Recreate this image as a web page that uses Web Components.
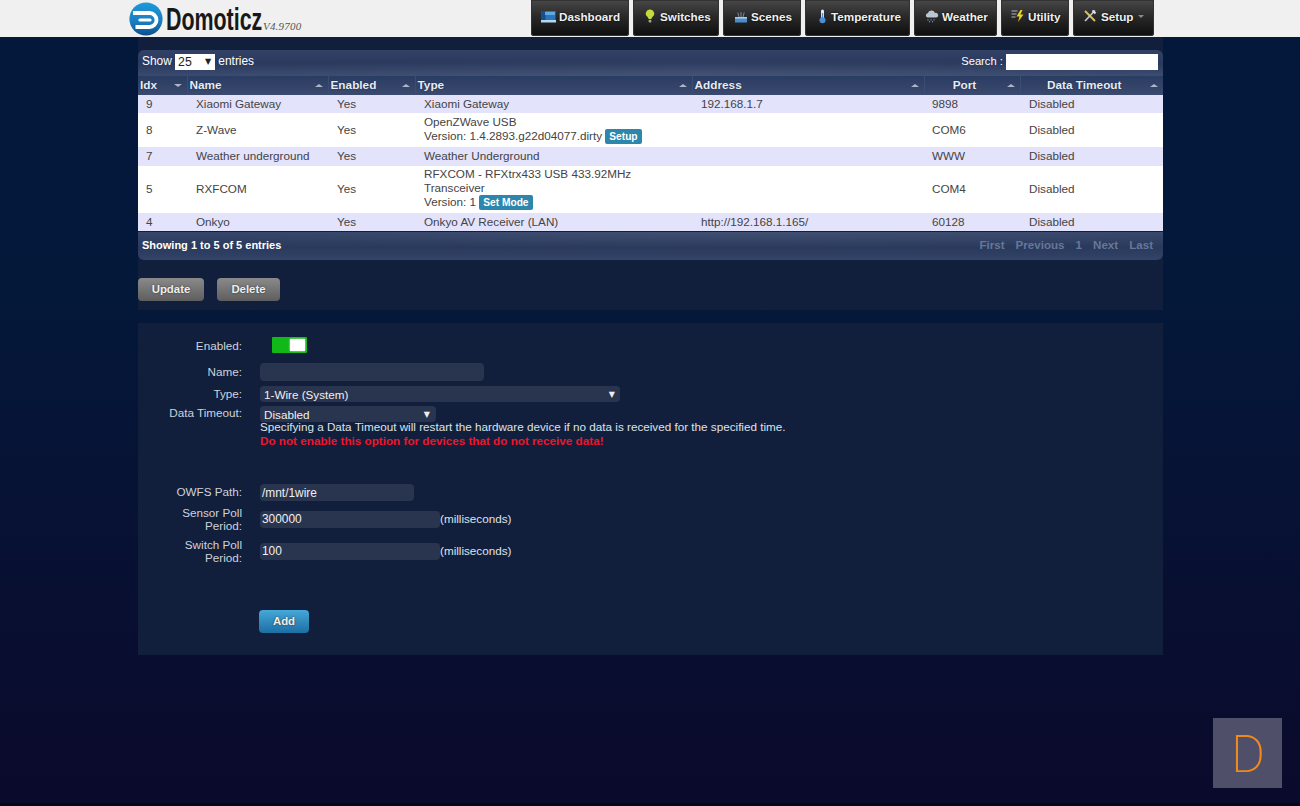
<!DOCTYPE html>
<html><head><meta charset="utf-8"><style>
html,body{margin:0;padding:0}
body{width:1300px;height:806px;overflow:hidden;background:linear-gradient(#03193a 0,#04183a 300px,#0a0c2e 720px,#0a0b2c 802px,#050516 804px);font:12px "Liberation Sans",Arial,sans-serif;position:relative}
</style></head><body>
<template id="t-header"><style>
:host{display:flex;height:37px;background:#f0f0f0;box-sizing:border-box;padding-left:129px;align-items:flex-start;position:relative}
.logo{display:flex;align-items:flex-start;width:402px;flex:none}
.logo svg{margin-top:2px;flex:none}
.name{display:block;width:97px;flex:none;font:bold 31px/34px "Liberation Sans",sans-serif;color:#181818;margin-left:3px;margin-top:3px;transform:scaleX(.69);transform-origin:left top;white-space:nowrap}
.v{font:italic 11px "Liberation Serif",serif;color:#555;margin-top:20px;margin-left:0;letter-spacing:.2px}
nav{display:flex;gap:4px}
</style><div class="logo"><svg width="34" height="34" viewBox="0 0 34 34"><defs><linearGradient id="lg" x1="0" y1="0" x2="0" y2="1"><stop offset="0" stop-color="#1e9ad8"/><stop offset=".6" stop-color="#1a7cc0"/><stop offset="1" stop-color="#0a4f8c"/></linearGradient></defs><circle cx="17" cy="17" r="16.6" fill="url(#lg)"/><path d="M4 11H20.5a7 7 0 0 1 0 14H6.5" fill="none" stroke="#fff" stroke-width="3.8"/><path d="M11 18H21" stroke="#fff" stroke-width="3.2" stroke-linecap="round"/></svg><span class="name">Domoticz</span><span class="v">V4.9700</span></div><nav><slot></slot></nav></template>

<template id="t-nav"><style>
:host{display:flex;align-items:center;height:36px;box-sizing:border-box;background:linear-gradient(#474747,#2a2a2a 45%,#0d0d0d);border-radius:0 0 3px 3px;color:#f0f0f0;font:bold 11.7px "Liberation Sans",sans-serif;text-shadow:0 0 2px #000;padding:0 0 4px var(--l,10px);gap:var(--g,3px);width:var(--w,80px);box-shadow:0 0 0 1px #333 inset;white-space:nowrap}
::slotted(svg){flex:none}
</style><slot name="i"></slot><slot></slot></template>

<template id="t-panel"><style>
:host{display:block;background:#111f3d}
</style><slot></slot></template>

<template id="t-table"><style>
:host{display:block;color:#fff;font:12px "Liberation Sans",sans-serif}
.top{height:26px;box-sizing:border-box;border-radius:6px 6px 0 0;background:radial-gradient(ellipse 55% 70% at 55% 100%,rgba(255,255,255,.05),transparent),linear-gradient(#324266,#2a3a5e 50%,#3a4a6e 100%);display:flex;align-items:center;justify-content:space-between;padding:0 5px 3px 4px;font-size:11.9px}
.fake{display:inline-flex;align-items:center;justify-content:space-between;background:#fff;color:#222;width:40px;height:16px;box-sizing:border-box;padding:0 4px 0 3px;font-size:12.3px;vertical-align:middle}
.fake i{font:normal 8px "DejaVu Sans",sans-serif}
.sr{font-size:11.2px}
.srch{display:inline-block;width:152px;height:16px;background:#fff;vertical-align:middle}
table{width:1025px;border-collapse:collapse;table-layout:fixed;border-spacing:0}
th{height:19px;padding:0 2px 1px;box-sizing:border-box;font-size:11.8px;font-weight:bold;color:#e9edf5;background:linear-gradient(#2a3c62,#3b4a6e);border-right:1px solid #3c4d72;text-align:left;position:relative;text-shadow:0 0 1px #0a1838}
th:last-child{border-right:0}
th.c{text-align:center;padding-right:17px}
th::after{content:"";position:absolute;right:5px;top:8px;width:0;height:0;border:4px solid transparent;border-bottom:3px solid #aeb7c8;border-top:0}
th.d::after{border-bottom:0;border-top:3px solid #aeb7c8}
td{padding:0 8px 0 9px;box-sizing:border-box;font-size:11.7px;line-height:14px;color:#444;vertical-align:middle}
td:first-child,td:nth-child(6){padding-left:8px}
tr.u td{padding-bottom:2px}
tr.z td{padding-bottom:0}
tr.z td:nth-child(4){padding-bottom:2px}
tr.o td{background:#e3e3fc;height:18px}
tr.e td{background:#fff}
.b{display:inline-block;background:#2d87ad;color:#fff;font-weight:bold;font-size:10.2px;line-height:15px;padding:0 4px;border-radius:2px;vertical-align:0}
.foot{height:28px;margin-top:1px;box-sizing:border-box;border-radius:0 0 6px 6px;background:radial-gradient(ellipse 55% 60% at 60% 0,rgba(255,255,255,.05),transparent),linear-gradient(#36466b,#2a3a5c 55%,#33436a);display:flex;align-items:center;justify-content:space-between;padding:0 10px 3px 4px;font-weight:bold;font-size:11px}
.pg{display:flex;gap:11px;color:#66779a;font-size:11.6px}
</style>
<div class="top"><span>Show <span class="fake">25<i>▼</i></span> entries</span><span class="sr">Search : <span class="srch"></span></span></div>
<table><colgroup><col style="width:49px"><col style="width:141px"><col style="width:87px"><col style="width:277px"><col style="width:232px"><col style="width:96px"><col style="width:143px"></colgroup>
<thead><tr><th class="d">Idx</th><th>Name</th><th>Enabled</th><th>Type</th><th>Address</th><th class="c">Port</th><th class="c">Data Timeout</th></tr></thead>
<tbody>
<tr class="o"><td>9</td><td>Xiaomi Gateway</td><td>Yes</td><td>Xiaomi Gateway</td><td>192.168.1.7</td><td>9898</td><td>Disabled</td></tr>
<tr class="e z" style="height:34px"><td>8</td><td>Z-Wave</td><td>Yes</td><td>OpenZWave USB<br>Version: 1.4.2893.g22d04077.dirty <span class="b">Setup</span></td><td></td><td>COM6</td><td>Disabled</td></tr>
<tr class="o u" style="height:19px"><td>7</td><td>Weather underground</td><td>Yes</td><td>Weather Underground</td><td></td><td>WWW</td><td>Disabled</td></tr>
<tr class="e u" style="height:47px"><td>5</td><td>RXFCOM</td><td>Yes</td><td>RFXCOM - RFXtrx433 USB 433.92MHz Transceiver<br>Version: 1 <span class="b">Set Mode</span></td><td></td><td>COM4</td><td>Disabled</td></tr>
<tr class="o"><td>4</td><td>Onkyo</td><td>Yes</td><td>Onkyo AV Receiver (LAN)</td><td>http://192.168.1.165/</td><td>60128</td><td>Disabled</td></tr>
</tbody></table>
<div class="foot"><span>Showing 1 to 5 of 5 entries</span><span class="pg"><span>First</span><span>Previous</span><span>1</span><span>Next</span><span>Last</span></span></div>
</template>

<template id="t-btn"><style>
:host{display:inline-flex;align-items:center;justify-content:center;height:23px;box-sizing:border-box;border-radius:4px;font:bold 11.4px "Liberation Sans",sans-serif;color:#eee;background:linear-gradient(#8a8a8a,#5e5e5e);padding-bottom:1px;width:var(--w,66px);text-shadow:0 0 2px #333}
:host([blue]){background:linear-gradient(#45a9d8,#1c6ea3)}
</style><slot></slot></template>

<template id="t-row"><style>
:host{display:flex;align-items:var(--a,flex-start);margin-top:var(--m,0);color:#cfd2d9;font:11.7px/13px "Liberation Sans",sans-serif}
.l{width:104px;flex:none;text-align:right;margin-right:18px;padding-top:var(--lt,0)}
.c{flex:none;display:flex;align-items:center;color:#dfe2e8}
</style><div class="l"><slot name="label"></slot></div><div class="c"><slot></slot></div></template>

<template id="t-field"><style>
:host{display:inline-flex;align-items:center;justify-content:space-between;box-sizing:border-box;height:var(--h,18px);width:var(--w,224px);background:#29344f;border-radius:4px;padding:0 5px 0 2px;color:#f0f0f0;font:11.9px "Liberation Sans",sans-serif;vertical-align:middle}
:host([arrow]){padding:1px 6px 0 4px;font-size:11.7px}
i{font:normal 8px "DejaVu Sans",sans-serif;color:#eee}
</style><span><slot></slot></span><i id="a"></i></template>

<template id="t-toggle"><style>
:host{display:block;width:35px;height:16px;background:#10b818;box-sizing:border-box;position:relative;border-radius:1px}
b{position:absolute;right:2px;top:2px;width:15px;height:12px;background:#fff;box-shadow:0 0 2px #bfb}
</style><b></b></template>

<template id="t-mark"><style>
:host{position:absolute;left:1213px;top:718px;width:69px;height:70px;background:#4f4f69;color:#f0891a;font:200 52px/73px Roboto,"Liberation Sans",sans-serif;text-align:center;text-indent:1px}
</style><slot></slot></template>

<dz-header>
<dz-nav style="--w:98px"><svg slot="i" width="15" height="13" viewBox="0 0 15 13"><rect x="0.5" y="1" width="14" height="9" fill="#2a75bd"/><rect x="0.5" y="1" width="4" height="9" fill="#154f90"/><rect x="4" y="2" width="10" height="3" fill="#5ea9e2"/><rect x="0" y="10" width="15" height="2.5" fill="#b4d8f0"/></svg>Dashboard</dz-nav>
<dz-nav style="--w:86px;--l:11px;--g:4px"><svg slot="i" width="12" height="14" viewBox="0 0 12 14"><path d="M6 0.5a4 4 0 0 1 2.6 7.2c-.8.8-1.2 1.6-1.2 2.4H4.6c0-.8-.4-1.6-1.2-2.4A4 4 0 0 1 6 .5z" fill="#c6da3e"/><rect x="4.6" y="10.8" width="2.8" height="2.6" rx="1" fill="#a8a890"/></svg>Switches</dz-nav>
<dz-nav style="--w:78px;--l:11px"><svg slot="i" width="14" height="14" viewBox="0 0 14 14"><rect x="1" y="8" width="12" height="5.5" fill="#4a8ccc"/><rect x="1" y="8" width="12" height="1.6" fill="#a6cdee"/><path d="M7 8V3M5 8 3.8 3.5M9 8l1.2-4.5" stroke="#8593a6" stroke-width=".9"/></svg>Scenes</dz-nav>
<dz-nav style="--w:105px;--l:13px;--g:4px"><svg slot="i" width="9" height="15" viewBox="0 0 9 15"><rect x="3" y="0.5" width="3" height="9" rx="1.5" fill="#e8eef5"/><circle cx="4.5" cy="11.3" r="3" fill="#4c8fd8"/><rect x="3.8" y="4" width="1.4" height="6" fill="#4c8fd8"/></svg>Temperature</dz-nav>
<dz-nav style="--w:83px;--l:11px"><svg slot="i" width="14" height="13" viewBox="0 0 14 13"><path d="M2.5 7.5a2.2 2.2 0 0 1 .3-4.3 3.8 3.8 0 0 1 7.2-.3 2.3 2.3 0 0 1 1.4 4.6z" fill="#bcc6d2"/><path d="M3 9v1.6M6 9v1.6M9 9v1.6M4.5 11v1.4M7.5 11v1.4" stroke="#5f96d0" stroke-width="1"/></svg>Weather</dz-nav>
<dz-nav style="--w:68px"><svg slot="i" width="14" height="14" viewBox="0 0 14 14"><path d="M0.5 2h6M0.5 5h5M0.5 8h4" stroke="#a9bace" stroke-width="1.2"/><path d="M9.5 1 5.5 7.5h3L7 13l5.5-7.5H9.3L11.5 1z" fill="#f1d21c"/></svg>Utility</dz-nav>
<dz-nav style="--w:81px;--g:4px"><svg slot="i" width="14" height="14" viewBox="0 0 14 14"><path d="M2 2l10 10" stroke="#d8c24a" stroke-width="2"/><path d="M12 1.5 2 12" stroke="#c8ccd0" stroke-width="1.6"/><path d="M9.5 1.5l3 3" stroke="#e0e3e6" stroke-width="2"/></svg>Setup<span style="display:inline-block;width:0;height:0;border:3px solid transparent;border-top-color:#888;border-bottom:0;margin-left:1px"></span></dz-nav>
</dz-header>

<dz-page>
<dz-panel style="padding:13px 0 0;height:273px;box-sizing:border-box">
<dz-table></dz-table>
<div style="display:flex;gap:13px;margin-top:18px"><dz-btn>Update</dz-btn><dz-btn style="--w:63px">Delete</dz-btn></div>
</dz-panel>
<dz-panel style="margin-top:13px;height:332px;box-sizing:border-box;padding-top:14px">
<dz-row style="--lt:2px"><span slot="label">Enabled:</span><dz-toggle style="margin-left:12px"></dz-toggle></dz-row>
<dz-row style="--m:10px;--lt:2px"><span slot="label">Name:</span><dz-field></dz-field></dz-row>
<dz-row style="--m:5px;--lt:1px"><span slot="label">Type:</span><dz-field style="--w:360px;--h:16px;padding-right:5px" arrow>1-Wire (System)</dz-field></dz-row>
<dz-row style="--m:4px"><span slot="label">Data Timeout:</span><div><dz-field style="--w:176px;--h:16px;display:flex" arrow>Disabled</dz-field><div style="line-height:14px;margin-top:-2px">Specifying a Data Timeout will restart the hardware device if no data is received for the specified time.<br><b style="color:#f0142a">Do not enable this option for devices that do not receive data!</b></div></div></dz-row>
<dz-row style="--m:36px;--lt:1px"><span slot="label">OWFS Path:</span><dz-field style="--w:154px;--h:17px">/mnt/1wire</dz-field></dz-row>
<dz-row style="--m:5px;--a:center"><span slot="label">Sensor Poll<br>Period:</span><dz-field style="--w:180px;--h:17px">300000</dz-field><span style="padding-bottom:1px">(milliseconds)</span></dz-row>
<dz-row style="--m:6px;--a:center"><span slot="label">Switch Poll<br>Period:</span><dz-field style="--w:180px;--h:17px">100</dz-field><span style="padding-bottom:2px">(milliseconds)</span></dz-row>
<div style="margin:46px 0 0 121px"><dz-btn blue style="--w:50px">Add</dz-btn></div>
</dz-panel>
</dz-page>
<dz-mark>D</dz-mark>
<script>
function def(n,t){customElements.define(n,class extends HTMLElement{constructor(){super();this.attachShadow({mode:'open'}).appendChild(document.getElementById(t).content.cloneNode(true))}})}
def('dz-header','t-header');def('dz-nav','t-nav');def('dz-panel','t-panel');def('dz-table','t-table');def('dz-btn','t-btn');def('dz-row','t-row');
def('dz-toggle','t-toggle');def('dz-mark','t-mark');
customElements.define('dz-page',class extends HTMLElement{constructor(){super();this.attachShadow({mode:'open'}).innerHTML='<style>:host{display:block;width:1025px;margin-left:138px}</style><slot></slot>'}});
customElements.define('dz-field',class extends HTMLElement{constructor(){super();this.attachShadow({mode:'open'}).appendChild(document.getElementById('t-field').content.cloneNode(true))}connectedCallback(){if(this.hasAttribute('arrow'))this.shadowRoot.getElementById('a').textContent='▼'}});
</script>
</body></html>
